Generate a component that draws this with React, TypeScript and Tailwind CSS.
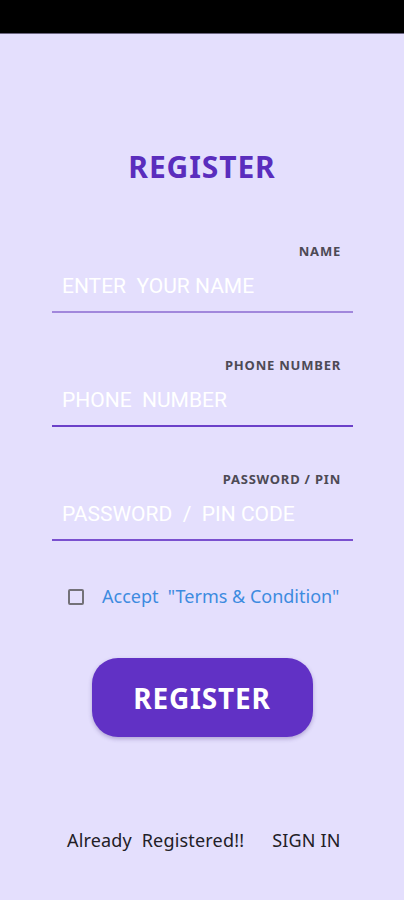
import React, { useState } from "react";

const fields = [
  { label: "NAME", placeholder: "ENTER  YOUR NAME", line: "bg-[#a187dc]" },
  { label: "PHONE NUMBER", placeholder: "PHONE  NUMBER", line: "bg-[#6b40c9]" },
  { label: "PASSWORD / PIN", placeholder: "PASSWORD  /  PIN CODE", line: "bg-[#7a50cf]" },
];

export default function App() {
  const [accepted, setAccepted] = useState(false);

  return (
    <div className="min-h-[900px] w-[404px] bg-[#e4dffd] flex flex-col font-['Noto_Sans',sans-serif]">
      {/* status bar */}
      <div className="h-[34px] bg-black border-b border-[#6b6680]" />

      <h1 className="mt-[115px] text-center text-[30px] leading-[36px] font-bold tracking-[0.03em] text-[#5a2dbd]">
        REGISTER
      </h1>

      {/* form fields */}
      <div className="mt-[58px] flex flex-col gap-[44px] pl-[52px] pr-[51px]">
        {fields.map((f) => (
          <div key={f.label} className="flex flex-col">
            <span className="self-end pr-[12px] text-[13px] leading-[16px] font-bold text-[#4d4a55] tracking-[0.06em]">
              {f.label}
            </span>
            <input
              placeholder={f.placeholder}
              className="mt-[11px] h-[32px] bg-transparent px-[10px] text-[21px] text-white placeholder:text-white outline-none font-['Roboto',sans-serif]"
            />
            <div className={`mt-[9px] h-[2px] ${f.line}`} />
          </div>
        ))}
      </div>

      {/* terms */}
      <label className="mt-[42px] ml-[68px] flex items-center gap-[18px]">
        <input
          type="checkbox"
          checked={accepted}
          onChange={() => setAccepted(!accepted)}
          className="h-[16px] w-[16px] appearance-none rounded-[2px] border-2 border-[#737178] bg-transparent"
        />
        <span className="text-[18px] text-[#3d8be0]">Accept&nbsp; "Terms &amp; Condition"</span>
      </label>

      <button className="mt-[48px] self-center h-[79px] w-[221px] rounded-[26px] bg-[#6131c5] text-white text-[28px] font-bold tracking-[0.03em] shadow-[0_2px_4px_rgba(60,30,120,0.3)]">
        REGISTER
      </button>

      <div className="mt-[90px] ml-[67px] flex items-center text-[18px] text-[#222026] tracking-[0.01em]">
        <span>Already&nbsp; Registered!!</span>
        <span className="ml-[28px]">SIGN IN</span>
      </div>
    </div>
  );
}
